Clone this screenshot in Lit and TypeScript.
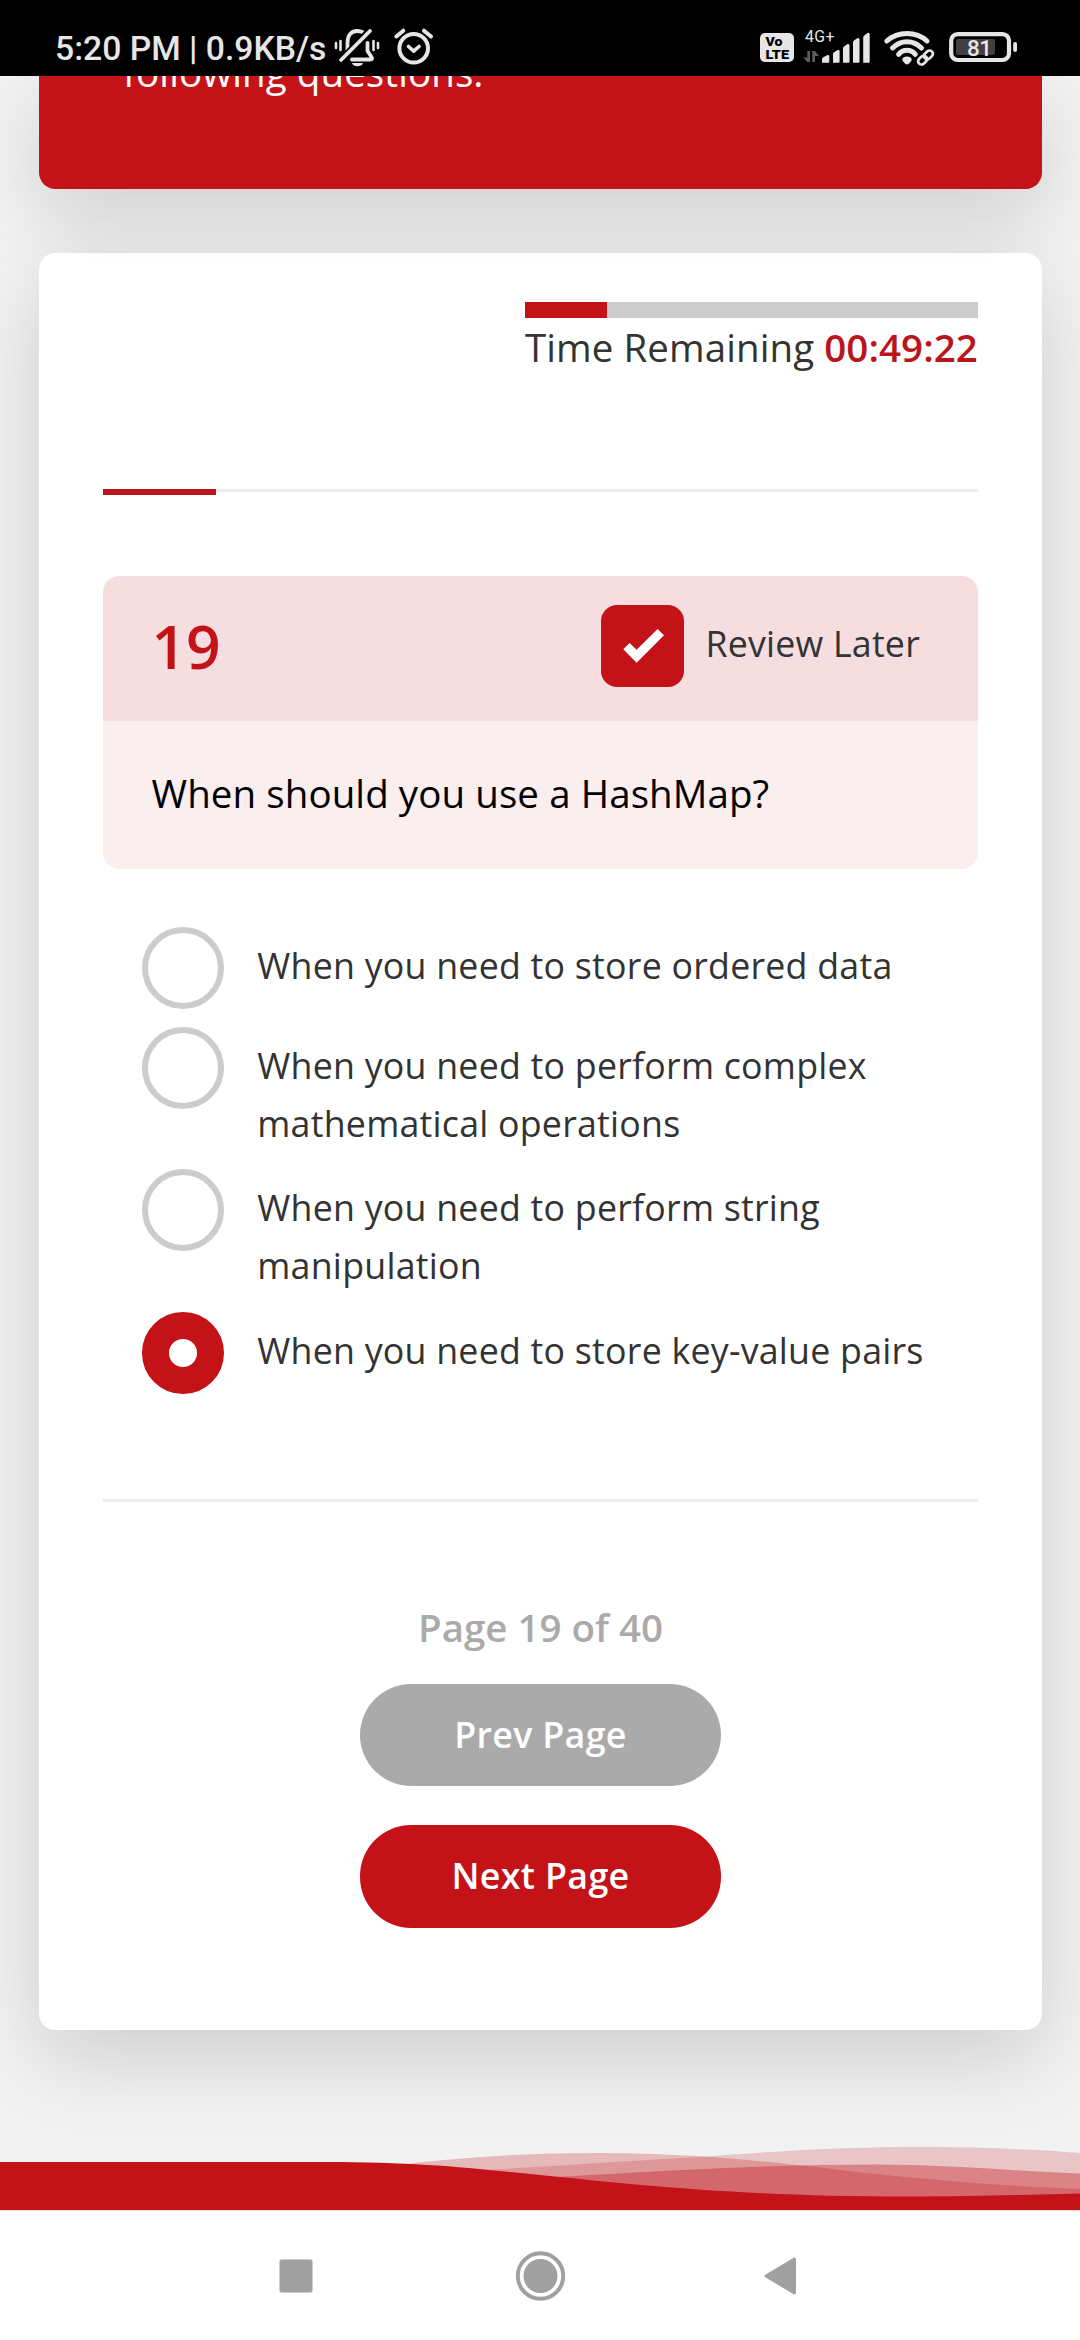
import { LitElement, html, css } from "lit";
import { customElement, property } from "lit/decorators.js";
import { classMap } from "lit/directives/class-map.js";

@customElement("status-bar")
class StatusBar extends LitElement {
  static styles = css`
    :host {
      display: flex;
      justify-content: space-between;
      align-items: flex-start;
      height: 76px;
      box-sizing: border-box;
      padding: 24px 60px 0 55px;
      background: #000;
      color: #e6e6e6;
      font-family: Roboto, sans-serif;
    }
    .group { display: flex; align-items: flex-start; gap: 7px; }
    .clock { width: 272px; padding-top: 7px; font-size: 33.7px; line-height: 36px; font-weight: 500; white-space: nowrap; }
    svg { display: block; }
  `;
  render() {
    return html`
      <div class="group">
        <span class="clock">5:20 PM | 0.9KB/s</span>
        <svg width="104" height="48" viewBox="334 24 104 48" fill="none" stroke="#e6e6e6" stroke-linecap="round" stroke-linejoin="round">
          <path d="M347.500 50V43C347.500 35.500 351 31 357 31c3.500 0 6 1 8 3M367.500 43v8l4 6q1.500 2.500-1 2.500H352" stroke-width="3.800"/>
          <path d="M338.500 59.500L367.500 29.500" stroke="#000" stroke-width="2.500"/>
          <path d="M341 60L370 31" stroke-width="3.800"/>
          <path d="M336 43v5M340.500 41v9M373.500 41v9M378 43v5" stroke-width="2.600"/>
          <path d="M352 63h11c-1 4.300-10 4.300-11 0z" fill="#e6e6e6" stroke="none"/>
          <circle cx="413.700" cy="48.300" r="14.300" stroke-width="4"/>
          <path d="M396.300 36.500L403.300 30.700M431 36.500L424 30.700" stroke-width="4"/>
          <path d="M408.500 46.500l5.200 4.700 5.300-4.700" stroke-width="3.600"/>
        </svg>
      </div>
      <svg width="260" height="48" viewBox="760 24 260 48" fill="#e6e6e6">
        <rect x="760" y="33" width="34" height="29" rx="5"/>
        <g font-weight="900" font-size="12.300" fill="#000">
          <text x="765.500" y="46" textLength="17" lengthAdjust="spacingAndGlyphs">Vo</text>
          <text x="765.500" y="58.500" textLength="23.500" lengthAdjust="spacingAndGlyphs">LTE</text>
        </g>
        <text x="805" y="42" font-size="15.800" textLength="29.500">4G+</text>
        <path d="M807.300 51h2.700v11h-2.700l-4-4.500h4zM812.300 62h2.700v-6h4l-4-5h-2.700z" fill="#5c5c5c"/>
        <path d="M822 62.700v-3.200q0-1.500 1.300-2.300l4.200-2.200q1.800-.4 1.800 1.500v5.200q0 1-1 1zM833 62.700v-8.500q0-1.500 1.300-2.300l3.500-2q1.800-.4 1.800 1.500v10.300q0 1-1 1zM843 62.700V48.500q0-1.500 1.300-2.300l3.400-2.200q1.800-.4 1.800 1.500v16.200q0 1-1 1zM853 62.700V42.500q0-1.500 1.300-2.300l3.400-2.200q1.800-.4 1.800 1.500v22.200q0 1-1 1zM863.200 62.700V37.500q0-1.500 1.300-2.300l3.400-2.500q1.800-.4 1.800 1.500v27.500q0 1-1 1z"/>
        <g fill="none" stroke="#e6e6e6" stroke-width="5" stroke-linecap="round">
          <path d="M886.800 41C898 31 916 31 927 41M892.500 48C900.500 39.500 913.500 39.500 921.500 48M898.600 54.300C903 49 911 49 915.300 54.300"/>
          <g stroke-width="2.700" transform="translate(925.500 57.500) rotate(-42)">
            <rect x="-8.800" y="-3.300" width="9.800" height="6.600" rx="3.300" stroke="#000" stroke-width="6"/>
            <rect x="-8.800" y="-3.300" width="9.800" height="6.600" rx="3.300"/>
            <rect x="-1" y="-3.300" width="9.800" height="6.600" rx="3.300"/>
          </g>
        </g>
        <path d="M902.300 59.500c0-4 9.400-4 9.400 0 0 1.500-3 5-4.700 5s-4.700-3.500-4.700-5z"/>
        <rect x="951.200" y="34.200" width="57.800" height="25.800" rx="6.500" fill="none" stroke="#e6e6e6" stroke-width="4.200"/>
        <rect x="956" y="39" width="39" height="16" rx="2" fill="#404040"/>
        <rect x="1013.200" y="42" width="3.800" height="10" rx="1.900"/>
        <text x="967" y="56" font-size="22.500" font-weight="500" textLength="25">81</text>
      </svg>
    `;
  }
}

@customElement("timer-panel")
class TimerPanel extends LitElement {
  @property() remaining = "";
  @property({ type: Number }) elapsed = 0;
  static styles = css`
    :host { display: block; width: 453px; margin-left: auto; }
    .track { height: 16px; background: #ccc; }
    .fill { height: 100%; background: #c31218; }
    .text { padding-top: 3px; font-size: 38.5px; line-height: 52px; letter-spacing: 0.07px; color: #333; white-space: nowrap; }
    .time { color: #b9151b; font-weight: 600; }
  `;
  render() {
    return html`
      <div class="track"><div class="fill" style="width:${this.elapsed}%"></div></div>
      <div class="text">Time Remaining <span class="time">${this.remaining}</span></div>
    `;
  }
}

@customElement("question-box")
class QuestionBox extends LitElement {
  @property({ type: Number }) number = 0;
  @property() text = "";
  static styles = css`
    :host { display: block; border-radius: 16.5px; overflow: hidden; background: #faeeee; }
    .head { display: flex; align-items: flex-start; height: 145px; box-sizing: border-box; padding: 29px 0 0 48.5px; background: #f6dee0; }
    .num { flex: 1; font-size: 60.5px; line-height: 81px; font-weight: 600; color: #c31218; }
    .review { display: flex; align-items: flex-start; gap: 21.5px; width: 377px; }
    .box { display: block; width: 83px; height: 82px; border-radius: 16px; background: #c31218; }
    .label { font-size: 35.75px; line-height: 76px; letter-spacing: 0.2px; color: #333; }
    .body { padding: 43px 48.5px 46.700px; font-size: 38.5px; line-height: 58px; letter-spacing: 0.08px; color: #000; }
  `;
  render() {
    return html`
      <div class="head">
        <span class="num">${this.number}</span>
        <div class="review">
          <svg class="box" viewBox="0 0 83 82"><path d="M22.300 44.300L28.600 38 35.600 44.700 56.600 24 63 30.300 35.600 57.700z" fill="#fff"/></svg>
          <span class="label">Review Later</span>
        </div>
      </div>
      <div class="body">${this.text}</div>
    `;
  }
}

@customElement("answer-option")
class AnswerOption extends LitElement {
  @property({ type: Boolean }) selected = false;
  @property() text = "";
  static styles = css`
    :host { display: grid; grid-template-columns: 82px 1fr; column-gap: 33.3px; padding-bottom: 17.85px; }
    .radio { width: 82px; height: 82px; box-sizing: border-box; border: 6px solid #ccc; border-radius: 50%; background: #fff; }
    .radio.on { border: 27px solid #c31218; }
    .text { padding-top: 9px; font-size: 35.75px; line-height: 58px; letter-spacing: 0.23px; color: #333; }
  `;
  render() {
    return html`
      <span class=${classMap({ radio: true, on: this.selected })}></span>
      <span class="text">${this.text}</span>
    `;
  }
}

@customElement("wave-footer")
class WaveFooter extends LitElement {
  static styles = css`
    :host { display: block; height: 65px; }
    svg { display: block; }
  `;
  render() {
    return html`
      <svg width="1080" height="65" viewBox="0 2145 1080 65" fill="#c31218">
        <path opacity=".2" d="M380 2175C540 2168 620 2161 700 2157 790 2150 850 2147 925 2147 990 2147 1040 2150 1080 2153V2210H380z"/>
        <path opacity=".25" d="M380 2167Q490 2153 592 2153C730 2153 800 2167 900 2176.500 980 2184 1030 2187 1080 2189V2210H380z"/>
        <path opacity=".36" d="M400 2184C570 2179 700 2164.500 875 2164.500 950 2164.500 1010 2171 1080 2173.500V2210H400z"/>
        <path d="M0 2162H325C420 2162 470 2168 540 2175 640 2185 740 2196.500 910 2196.500 970 2196.500 1020 2195 1080 2193.500V2210H0z"/>
      </svg>
    `;
  }
}

@customElement("nav-bar")
class NavBar extends LitElement {
  static styles = css`
    :host { display: flex; justify-content: space-between; align-items: center; height: 130px; box-sizing: border-box; padding: 0 283px 0 279px; background: #fff; border-top: 1px solid #ffd9d9; }
    svg { display: block; }
  `;
  render() {
    return html`
      <svg width="34" height="34" viewBox="0 0 34 34"><rect x=".5" y=".5" width="33" height="33" rx="2" fill="#a0a0a0"/></svg>
      <svg width="52" height="50" viewBox="0 0 52 50"><circle cx="27.500" cy="25" r="22.700" fill="none" stroke="#a0a0a0" stroke-width="4"/><circle cx="27.500" cy="25" r="17" fill="#a0a0a0"/></svg>
      <svg width="33" height="38" viewBox="0 0 33 38"><path d="M2 19L30.500 2V36z" fill="#a0a0a0" stroke="#a0a0a0" stroke-width="3" stroke-linejoin="round"/></svg>
    `;
  }
}

@customElement("app-root")
class AppRoot extends LitElement {
  private options = [
    { text: "When you need to store ordered data", selected: false },
    { text: "When you need to perform complex mathematical operations", selected: false },
    { text: "When you need to perform string manipulation", selected: false },
    { text: "When you need to store key-value pairs", selected: true },
  ];
  static styles = css`
    :host { display: flex; flex-direction: column; width: 1080px; height: 2340px; overflow: hidden; background: #f2f2f2; font-family: "Open Sans", "Noto Sans", sans-serif; }
    main { display: flex; flex-direction: column; height: 2134px; overflow: hidden; }
    .intro, .quiz { margin: 0 38px 0 39px; box-shadow: 0 27.5px 82.5px rgba(0, 0, 0, 0.15); }
    .intro { flex: none; height: 113px; overflow: hidden; border-radius: 0 0 16.5px 16.5px; background: #c31218; color: #fff; font-size: 38.5px; letter-spacing: 0.1px; }
    .intro p { margin: -29px 0 0 84px; line-height: 50px; }
    .quiz { flex: none; display: flex; flex-direction: column; height: 1777px; box-sizing: border-box; margin-top: 64px; margin-bottom: 115px; padding: 49px 64px 0; border-radius: 16.5px; background: rgba(255, 255, 255, 0.95); }
    .progress { height: 6px; box-sizing: border-box; margin: 116px 0 81px; background: linear-gradient(#ededed, #ededed) 0 0 / 100% 3px no-repeat; }
    .progress div { height: 6px; background: #b9151b; }
    .options { padding: 58px 0 0 39px; }
    .rule { height: 3px; margin-top: 87px; background: #ededed; }
    .pager { display: flex; flex-direction: column; align-items: center; padding-top: 98.7px; }
    .count { margin-bottom: 31px; font-size: 38.5px; line-height: 52px; font-weight: 600; color: #aaa; }
    button { display: block; width: 361px; height: 102px; margin: 0 0 39px; padding: 0 0 2px; border: 0; border-radius: 51px; background: #aaa; color: #fff; font: 600 35.75px/50px "Open Sans", "Noto Sans", sans-serif; letter-spacing: 0.35px; }
    button.next { height: 103px; background: #c31218; }
  `;
  render() {
    return html`
      <status-bar></status-bar>
      <main>
        <section class="intro"><p>following questions.</p></section>
        <section class="quiz">
          <timer-panel remaining="00:49:22" elapsed="18.1"></timer-panel>
          <div class="progress"><div style="width:${113 / 8.75}%"></div></div>
          <question-box number="19" text="When should you use a HashMap?"></question-box>
          <div class="options">
            ${this.options.map(o => html`<answer-option .text=${o.text} ?selected=${o.selected}></answer-option>`)}
          </div>
          <div class="rule"></div>
          <div class="pager">
            <div class="count">Page 19 of 40</div>
            <button>Prev Page</button>
            <button class="next">Next Page</button>
          </div>
        </section>
        <wave-footer></wave-footer>
      </main>
      <nav-bar></nav-bar>
    `;
  }
}
